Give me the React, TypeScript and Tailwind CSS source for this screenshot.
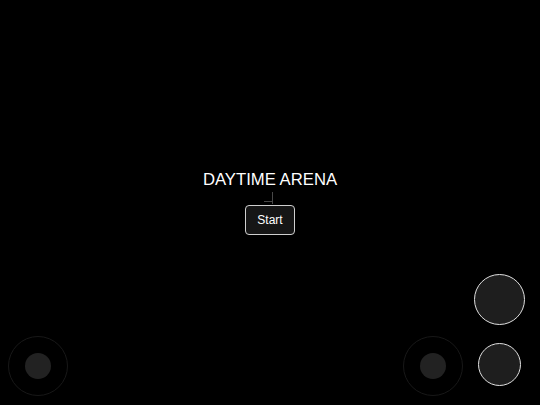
import React from 'react';

const Joystick = ({ side }: { side: 'left' | 'right' }) => (
  <div
    className={
      'absolute bottom-[9px] w-[60px] h-[60px] rounded-full border border-[#181818] flex items-center justify-center ' +
      (side === 'left' ? 'left-[8px]' : 'right-[77px]')
    }
  >
    <div className="w-[26px] h-[26px] rounded-full bg-[#222222]" />
  </div>
);

export default function App() {
  return (
    <div
      className="relative w-full h-[405px] bg-black overflow-hidden"
      style={{ fontFamily: '"Liberation Sans", Arial, sans-serif' }}
    >
      <div className="h-full flex flex-col items-center justify-center">
        <h1 className="text-[16.7px] leading-[20px] text-white tracking-normal">DAYTIME ARENA</h1>
        <svg width="12" height="13" viewBox="0 0 12 13" className="my-[1px] ml-[-2px]">
          <path d="M9.5 1v12M1 10.5h8.5" stroke="#484848" strokeWidth="1" fill="none" />
        </svg>
        <button className="w-[50px] h-[30px] rounded-[4px] border border-[#cfcfcf] bg-[#161616] text-white text-[12px]">
          Start
        </button>
      </div>

      <Joystick side="left" />
      <Joystick side="right" />

      <div className="absolute right-[15px] bottom-[80px] w-[51px] h-[51px] rounded-full bg-[#1e1e1e] border-[1.5px] border-[#e0e0e0]" />
      <div className="absolute right-[19px] bottom-[19px] w-[43px] h-[43px] rounded-full bg-[#1e1e1e] border-[1.5px] border-[#e0e0e0]" />
    </div>
  );
}
